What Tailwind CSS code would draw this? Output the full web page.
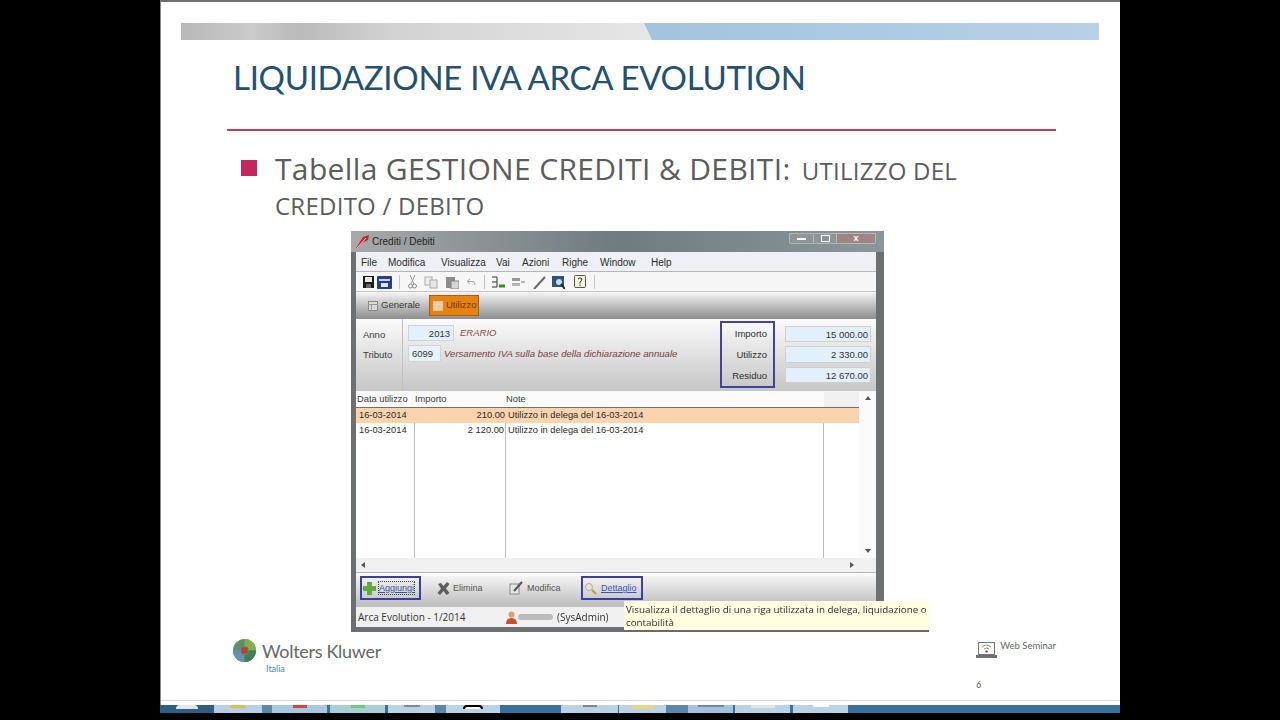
<!DOCTYPE html>
<html lang="en">
<head>
<meta charset="UTF-8">
<title>Liquidazione IVA Arca Evolution</title>
<script src="https://cdn.jsdelivr.net/npm/@tailwindcss/browser@4"></script>
</head>
<body class="bg-black h-[720px] overflow-hidden font-['Liberation_Sans',sans-serif]">
<div class="w-[960px] ml-[160px]">

  <!-- slide -->
  <div class="h-[705px] bg-white border-t-2 border-t-[#6e6e6e] border-l border-l-[#8a8a8a] flex flex-col overflow-hidden">
    <div class="mt-[21px] ml-[20px] w-[918px] h-[17px] flex shrink-0">
      <div class="w-[471px] bg-[linear-gradient(90deg,#b8b8b8,#cacaca_15%,#bababa_25%,#d2d2d2_45%,#dcdcdc_70%,#e6e6e6)]"></div>
      <div class="flex-1 -ml-[8px] bg-linear-to-r from-[#a3c3de] to-[#b9d0e6] [clip-path:polygon(0_0,100%_0,100%_100%,8px_100%)]"></div>
    </div>
    <div class="h-[89px] shrink-0 pt-[17px] pl-[72px]">
      <h1 class="font-['Lato',sans-serif] text-[33px] leading-[40px] text-[#25506f] tracking-[-0.3px] whitespace-nowrap">LIQUIDAZIONE IVA ARCA EVOLUTION</h1>
    </div>
    <div class="h-[2px] ml-[66px] w-[829px] bg-[#c23a5c] shrink-0"></div>
    <div class="h-[100px] shrink-0 pt-[22px] pl-[80px] flex items-start gap-[18px]">
      <div class="w-[16px] h-[16px] mt-[7px] bg-[#c2275f] shrink-0"></div>
      <p class="w-[720px] text-[#5c5c5c] leading-[32px] font-['Open_Sans',sans-serif]">
        <span class="text-[30px] leading-[32px] tracking-[0.35px]">Tabella GESTIONE CREDITI &amp; DEBITI:</span>
        <span class="ml-[7px] text-[24px] leading-[32px] tracking-[0.25px]">UTILIZZO DEL CREDITO / DEBITO</span>
      </p>
    </div>

    <!-- application window -->
    <div class="relative ml-[190px] w-[533px] h-[401px] shrink-0 bg-[#6d6f70] flex flex-col text-[9.5px] text-[#333] blur-[0.4px]">
      <div class="h-[21px] shrink-0 flex items-center bg-linear-to-r from-[#a9a9a9] via-[#6f7b7f] to-[#8b979a] pl-[4px] pr-[8px]">
        <svg width="15" height="15" viewBox="0 0 15 15"><path d="M1 14 L8 3 L14 1 L13 6 L7 9 L3 14 Z" fill="#c0242a"/><path d="M2 14 L11 4" stroke="#f3d9d9" stroke-width="1"/></svg>
        <span class="ml-[2px] text-[#222] text-[10px]">Crediti / Debiti</span>
        <div class="ml-auto flex h-[11px] -mt-[6px] border border-[#d0d0d0]/60 rounded-b-[2px]">
          <div class="w-[23px] flex items-center justify-center bg-[#8d9596]"><div class="w-[9px] h-[2px] bg-white"></div></div>
          <div class="w-[24px] flex items-center justify-center bg-[#8d9596] border-x border-[#d0d0d0]/60"><div class="w-[9px] h-[7px] border border-white"></div></div>
          <div class="w-[38px] flex items-center justify-center bg-[#a08585] text-white text-[9px] leading-none font-bold">x</div>
        </div>
      </div>
      <div class="flex-1 min-h-0 ml-[5px] mr-[8px] flex flex-col bg-white">
        <!-- menu -->
        <div class="h-[20px] shrink-0 flex items-center pt-px bg-[#eef0f6] border-b border-[#b5b5b5] text-[10px] text-[#2c2c2c] pl-[5px]">
          <span class="w-[27px]">File</span><span class="w-[53px]">Modifica</span><span class="w-[55px]">Visualizza</span><span class="w-[26px]">Vai</span><span class="w-[40px]">Azioni</span><span class="w-[38px]">Righe</span><span class="w-[51px]">Window</span><span>Help</span>
        </div>
        <!-- toolbar -->
        <div class="h-[20px] shrink-0 flex items-center bg-[#f6f6f6] border-b border-[#c4c4c4] pl-[7px] pt-px">
          <svg width="11" height="12" viewBox="0 0 11 12"><rect width="11" height="12" fill="#1c1c1c"/><rect x="2" y="1" width="7" height="5" fill="#e8e8e8"/><rect x="3" y="8" width="5" height="4" fill="#666"/></svg>
          <svg class="ml-[3px]" width="15" height="13" viewBox="0 0 15 13"><rect width="15" height="13" rx="1" fill="#27407e"/><rect x="2" y="3" width="11" height="2" fill="#c8d4ee"/><rect x="4" y="7" width="7" height="4" fill="#dfe5f2"/></svg>
          <div class="ml-[7px] w-px h-[14px] bg-[#c9c9c9]"></div>
          <svg class="ml-[8px]" width="9" height="14" viewBox="0 0 9 14"><path d="M2 0 L6 9 M7 0 L3 9" stroke="#9a9a9a" fill="none"/><circle cx="2.5" cy="11" r="2" fill="none" stroke="#888"/><circle cx="6.5" cy="11" r="2" fill="none" stroke="#888"/></svg>
          <svg class="ml-[7px]" width="14" height="13" viewBox="0 0 14 13"><rect x="1" y="1" width="7" height="8" fill="#eee" stroke="#aaa"/><rect x="6" y="4" width="7" height="8" fill="#e7e7e7" stroke="#aaa"/></svg>
          <svg class="ml-[8px]" width="13" height="13" viewBox="0 0 13 13"><rect x="0" y="1" width="9" height="11" fill="#8c8c8c"/><rect x="5" y="5" width="8" height="8" fill="#d6d6d6" stroke="#808080"/></svg>
          <svg class="ml-[7px]" width="10" height="8" viewBox="0 0 10 8"><path d="M4 1 L1 3.5 L4 6 M1 3.5 H7 Q9 3.5 9 7" stroke="#a9a9a9" fill="none"/></svg>
          <div class="ml-[8px] w-px h-[14px] bg-[#c0c0c0]"></div>
          <svg class="ml-[6px]" width="15" height="13" viewBox="0 0 15 13"><path d="M1 1 H6 V11 H1 M1 6 H6" stroke="#333" fill="none"/><path d="M8 10 H14" stroke="#3c8a2e" stroke-width="3"/></svg>
          <svg class="ml-[6px]" width="13" height="11" viewBox="0 0 13 11"><rect x="0" y="1" width="8" height="3" fill="#999"/><rect x="0" y="6" width="8" height="3" fill="#b5b5b5"/><path d="M9 5 H13" stroke="#777"/></svg>
          <svg class="ml-[7px]" width="15" height="13" viewBox="0 0 15 13"><path d="M2 13 L13 1" stroke="#666" stroke-width="2"/></svg>
          <svg class="ml-[5px]" width="13" height="13" viewBox="0 0 13 13"><rect width="12" height="11" fill="#34527d"/><circle cx="7" cy="6" r="3" fill="#bfe0e6"/><path d="M9 8 L13 13" stroke="#222" stroke-width="2"/></svg>
          <svg class="ml-[9px]" width="12" height="14" viewBox="0 0 12 14"><rect x="0.5" y="0.5" width="11" height="12" rx="1" fill="#f8f4dc" stroke="#555"/><path d="M4 4 Q6 1.5 8 4 Q8 6 6 7 V8.5 M6 9.5 V11" stroke="#333" fill="none"/></svg>
          <div class="ml-[8px] w-px h-[14px] bg-[#c9c9c9]"></div>
        </div>
        <!-- tabs -->
        <div class="h-[27px] shrink-0 flex items-center bg-linear-to-b from-[#f5f5f5] to-[#8e8e8e] pl-[12px]">
          <svg width="10" height="10" viewBox="0 0 10 10"><rect x="0.5" y="0.5" width="9" height="9" fill="#dadada" stroke="#888"/><path d="M0 3.5 H10 M3.5 3 V10" stroke="#999"/></svg>
          <span class="ml-[3px] w-[40px] text-[#3a3a3a]">Generale</span>
          <div class="ml-[8px] w-[50px] h-[21px] flex items-center pl-[3px] bg-[#e8820f] border border-[#a85f14]">
            <svg width="10" height="10" viewBox="0 0 10 10"><rect x="0.5" y="0.5" width="9" height="9" fill="#f0c890" stroke="#c6c6c6"/><path d="M0 3.5 H10 M3.5 3 V10" stroke="#d8d8d8"/></svg>
            <span class="ml-[3px] text-[#6e3a10]">Utilizzo</span>
          </div>
        </div>
        <!-- fields -->
        <div class="h-[72px] shrink-0 flex bg-linear-to-b from-[#fbfbfb] to-[#c6c6c6]">
          <div class="w-[47px] shrink-0 border-r border-[#c0c0c0] pl-[7px] pt-[8px] flex flex-col gap-[4px] text-[#3a3a3a]">
            <span class="h-[16px] leading-[16px]">Anno</span>
            <span class="h-[16px] leading-[16px]">Tributo</span>
          </div>
          <div class="w-[317px] shrink-0 pl-[5px] pt-[6px] flex flex-col gap-[4px]">
            <div class="flex items-center h-[16px]">
              <span class="w-[46px] h-[16px] leading-[15px] pr-[3px] text-right bg-[#e4f0fb] border border-[#d2d2d2]">2013</span>
              <span class="ml-[6px] italic text-[#8a4646]">ERARIO</span>
            </div>
            <div class="flex items-center h-[17px]">
              <span class="w-[33px] h-[17px] leading-[16px] pl-[3px] bg-[#e8f2fb] border border-[#d2d2d2]">6099</span>
              <span class="ml-[3px] pt-[2px] italic text-[9.6px] text-[#7a3c3c] whitespace-nowrap">Versamento IVA sulla base della dichiarazione annuale</span>
            </div>
          </div>
          <div class="w-[55px] h-[67px] mt-[2px] shrink-0 border-2 border-[#43439c] pr-[6px] pt-[3px] flex flex-col items-end gap-[5px] text-[#2e2e2e]">
            <span class="h-[16px] leading-[16px]">Importo</span>
            <span class="h-[16px] leading-[16px]">Utilizzo</span>
            <span class="h-[16px] leading-[16px]">Residuo</span>
          </div>
          <div class="ml-[10px] w-[86px] shrink-0 pt-[7px] flex flex-col gap-[4px]">
            <span class="h-[16px] leading-[15px] pr-[2px] text-right bg-[#e2f0fc] border border-[#cfcfcf]">15 000.00</span>
            <span class="h-[17px] leading-[16px] pr-[2px] text-right bg-[#e2f0fc] border border-[#cfcfcf]">2 330.00</span>
            <span class="h-[16px] leading-[15px] pr-[2px] text-right bg-[#e2f0fc] border border-[#cfcfcf]">12 670.00</span>
          </div>
        </div>
        <!-- table -->
        <div class="h-[167px] shrink-0 flex bg-white text-[9.3px]">
          <div class="w-[503px] shrink-0 flex flex-col">
            <div class="h-[17px] shrink-0 grid grid-cols-[59px_91px_318px_1fr] items-center pt-px bg-[#fafafa] border-b border-[#6f6f6f] text-[#3a3a3a]">
              <span class="pl-[1px]">Data utilizzo</span><span>Importo</span><span>Note</span><span class="bg-[#f0f0f0] h-full"></span>
            </div>
            <div class="h-[15px] shrink-0 grid grid-cols-[59px_91px_318px_1fr] items-center bg-[#fbd3ad] text-[#2a2a2a]">
              <span class="pl-[3px]">16-03-2014</span><span class="text-right pr-[1px]">210.00</span><span class="pl-[2px] whitespace-nowrap">Utilizzo in delega del 16-03-2014</span><span></span>
            </div>
            <div class="h-[15px] shrink-0 grid grid-cols-[59px_91px_318px_1fr] text-[#2a2a2a] leading-[15px]">
              <span class="pl-[3px] border-r border-[#bdbdbd]">16-03-2014</span><span class="text-right pr-[1px] border-r border-[#bdbdbd]">2 120.00</span><span class="pl-[2px] whitespace-nowrap border-r border-[#bdbdbd]">Utilizzo in delega del 16-03-2014</span><span></span>
            </div>
            <div class="flex-1 grid grid-cols-[59px_91px_318px_1fr]">
              <div class="border-r border-[#bdbdbd]"></div><div class="border-r border-[#bdbdbd]"></div><div class="border-r border-[#bdbdbd]"></div><div></div>
            </div>
          </div>
          <div class="flex-1 bg-[#fafafa] flex flex-col items-center justify-between py-[5px] text-[#555]">
            <div class="w-0 h-0 border-x-[3px] border-x-transparent border-b-[4px] border-b-[#555]"></div>
            <div class="w-0 h-0 border-x-[3px] border-x-transparent border-t-[4px] border-t-[#555]"></div>
          </div>
        </div>
        <!-- horizontal scrollbar -->
        <div class="h-[15px] shrink-0 flex items-center justify-between bg-[#f0f0f0] border-b border-[#b4b4b4] pl-[5px] pr-[22px]">
          <div class="w-0 h-0 border-y-[3px] border-y-transparent border-r-[4px] border-r-[#555]"></div>
          <div class="w-0 h-0 border-y-[3px] border-y-transparent border-l-[4px] border-l-[#555]"></div>
        </div>
        <!-- buttons -->
        <div class="h-[33px] shrink-0 flex items-center bg-linear-to-b from-[#fafafa] to-[#bdbdbd] pl-[4px] pb-[3px] text-[9px]">
          <div class="w-[61px] h-[24px] flex items-center border-2 border-[#3e3e9e] pl-[1px]">
            <svg width="13" height="13" viewBox="0 0 13 13"><path d="M4.5 0 H8.5 V4.5 H13 V8.5 H8.5 V13 H4.5 V8.5 H0 V4.5 H4.5 Z" fill="#5cae3a" stroke="#3b8a25" stroke-width="0.5"/></svg>
            <span class="ml-[2px] border border-dotted border-[#444] text-[#3a55a8] underline leading-[12px]">Aggiungi</span>
          </div>
          <svg class="ml-[16px]" width="13" height="13" viewBox="0 0 13 13"><path d="M1 2 L4 1 L6.5 4 L10 0 L12.5 2 L9 6.5 L12.5 11 L9.5 13 L6.5 9 L3 13 L0.5 11 L4 6.5 Z" fill="#5d5d5d"/></svg>
          <span class="ml-[3px] pt-[2px] w-[29px] text-[#555]">Elimina</span>
          <svg class="ml-[27px]" width="15" height="14" viewBox="0 0 15 14"><rect x="1" y="3" width="9" height="10" fill="#e6e6e6" stroke="#888"/><path d="M5 10 L13 1" stroke="#555" stroke-width="2"/></svg>
          <span class="ml-[3px] pt-[2px] w-[34px] text-[#555]">Modifica</span>
          <div class="ml-[20px] w-[62px] h-[24px] flex items-center border-2 border-[#3e3e9e] pl-[1px]">
            <svg width="13" height="13" viewBox="0 0 13 13"><circle cx="5" cy="5" r="3.5" fill="#d8e6f0" stroke="#c9a878"/><path d="M8 8 L12 12" stroke="#c98f4a" stroke-width="2"/></svg>
            <span class="ml-[4px] pt-[2px] text-[#3a55c0] underline">Dettaglio</span>
          </div>
        </div>
        <!-- status bar -->
        <div class="h-[21px] shrink-0 flex items-center bg-[#f0f0f0] border-t border-[#c2c2c2] font-['Open_Sans',sans-serif] text-[10px] text-[#333]">
          <span class="ml-[2px] w-[148px]">Arca Evolution - 1/2014</span>
          <svg width="11" height="13" viewBox="0 0 11 13"><circle cx="5.5" cy="3.5" r="3" fill="#e0a060"/><path d="M0 13 Q0 7 5.5 7 Q11 7 11 13 Z" fill="#c8502a"/></svg>
          <div class="ml-px w-[35px] h-[6px] rounded-full bg-[#bcbcbc]"></div>
          <span class="ml-[4px]">(SysAdmin)</span>
        </div>
      </div>
      <div class="h-[5px] shrink-0"></div>

      <!-- tooltip -->
      <div class="absolute left-[273px] top-[370px] w-[305px] h-[31px] bg-[#ffffe1] border-b-2 border-[#6a6a6a] pl-[2px] pt-[2px] font-['Open_Sans',sans-serif] text-[9.8px] leading-[13px] text-[#2b2b2b] whitespace-nowrap">
        Visualizza il dettaglio di una riga utilizzata in delega, liquidazione o<br>contabilità
      </div>
    </div>

    <!-- footer -->
    <div class="flex-1 min-h-0 flex justify-between pl-[72px] pr-[64px] pt-[7px] border-b border-[#dcdcdc] mb-[4px]">
      <div class="flex gap-[6px]">
        <svg width="23" height="23" viewBox="0 0 23 23" class="shrink-0">
          <circle cx="11.5" cy="11.5" r="11.5" fill="#5f8f6a"/>
          <path d="M11.5 0 A11.5 11.5 0 0 1 23 11.5 H16 A4.5 4.5 0 0 0 11.5 7 Z" fill="#7fb04a"/>
          <path d="M0 11.5 A11.5 11.5 0 0 0 11.5 23 V16 A4.5 4.5 0 0 1 7 11.5 Z" fill="#5f92b5"/>
          <path d="M23 11.5 A11.5 11.5 0 0 1 11.5 23 V16 A4.5 4.5 0 0 0 16 11.5 Z" fill="#3f7f55"/>
          <rect x="8.5" y="8.5" width="6" height="6" fill="#c9323f"/>
        </svg>
        <div class="flex flex-col">
          <span class="font-['Lato',sans-serif] text-[18px] tracking-[-0.3px] leading-[24px] text-[#666] whitespace-nowrap">Wolters Kluwer</span>
          <span class="ml-[4px] font-['Lato',sans-serif] text-[9px] leading-[11px] text-[#4b8aa5]">Italia</span>
        </div>
      </div>
      <div class="flex flex-col">
        <div class="flex gap-[3px] mt-[3px]">
          <svg width="21" height="17" viewBox="0 0 21 17"><rect x="2.5" y="0.5" width="16" height="12" fill="#fff" stroke="#777"/><path d="M6 5 Q10.5 1 15 5 M8 7 Q10.5 5 13 7" stroke="#6aa06a" fill="none"/><circle cx="10.5" cy="9.5" r="1.3" fill="#c23a4a"/><rect x="0" y="13" width="21" height="3" fill="#6e6e6e"/></svg>
          <span class="-mt-[2px] font-['Lato',sans-serif] text-[9.5px] leading-[12px] text-[#666]">Web Seminar</span>
        </div>
        <span class="mt-[21px] font-['Lato',sans-serif] text-[8.5px] leading-[10px] text-[#555]">6</span>
      </div>
    </div>
  </div>

  <!-- taskbar -->
  <div class="h-[8px] flex bg-[#3b6f9c]">
    <div class="w-[54px] bg-[#2e5f82] flex justify-center"><div class="w-[22px] h-[4px] rounded-t-full bg-[#dfe8ee]"></div></div>
    <div class="w-[48px] bg-[#b7d0e4] flex justify-center"><div class="w-[16px] h-[3px] rounded-t-full bg-[#d6c24a]"></div></div>
    <div class="w-[10px] bg-[#5b87aa]"></div>
    <div class="w-[55px] bg-[#a9c8e0] flex justify-center"><div class="w-[14px] h-[3px] bg-[#d94040]"></div></div>
    <div class="ml-[3px] w-[55px] bg-[#a9cfd6] flex justify-center"><div class="w-[14px] h-[3px] bg-[#6fc77a]"></div></div>
    <div class="ml-[3px] w-[47px] bg-[#b9d2e6] flex justify-center"><div class="w-[16px] h-[2px] bg-[#7d8b94]"></div></div>
    <div class="w-[11px] bg-[#5b87aa]"></div>
    <div class="w-[54px] bg-[#b9d2e6] flex justify-center"><div class="w-[20px] h-[4px] rounded-t-full border-t-2 border-x-2 border-black bg-white"></div></div>
    <div class="w-[61px]"></div>
    <div class="w-[57px] bg-[#b9d2e6] flex justify-center"><div class="w-[14px] h-[2px] bg-[#7d8b94]"></div></div>
    <div class="ml-px w-[47px] bg-[#bcd3e6] flex justify-center"><div class="w-[22px] h-[4px] bg-[#e6d889]"></div></div>
    <div class="w-[22px] bg-[#5b87aa]"></div>
    <div class="w-[45px] bg-[#a5c2dc] flex justify-center"><div class="w-[26px] h-[2px] bg-[#6f86b4]"></div></div>
    <div class="ml-[2px] w-[55px] bg-[#b9d2e6] flex justify-center"><div class="w-[24px] h-[3px] bg-[#dfe8df]"></div></div>
    <div class="ml-[3px] w-[55px] bg-[#b9d2e6] flex justify-center"><div class="w-[16px] h-[2px] bg-white"></div></div>
  </div>
</div>
</body>
</html>
